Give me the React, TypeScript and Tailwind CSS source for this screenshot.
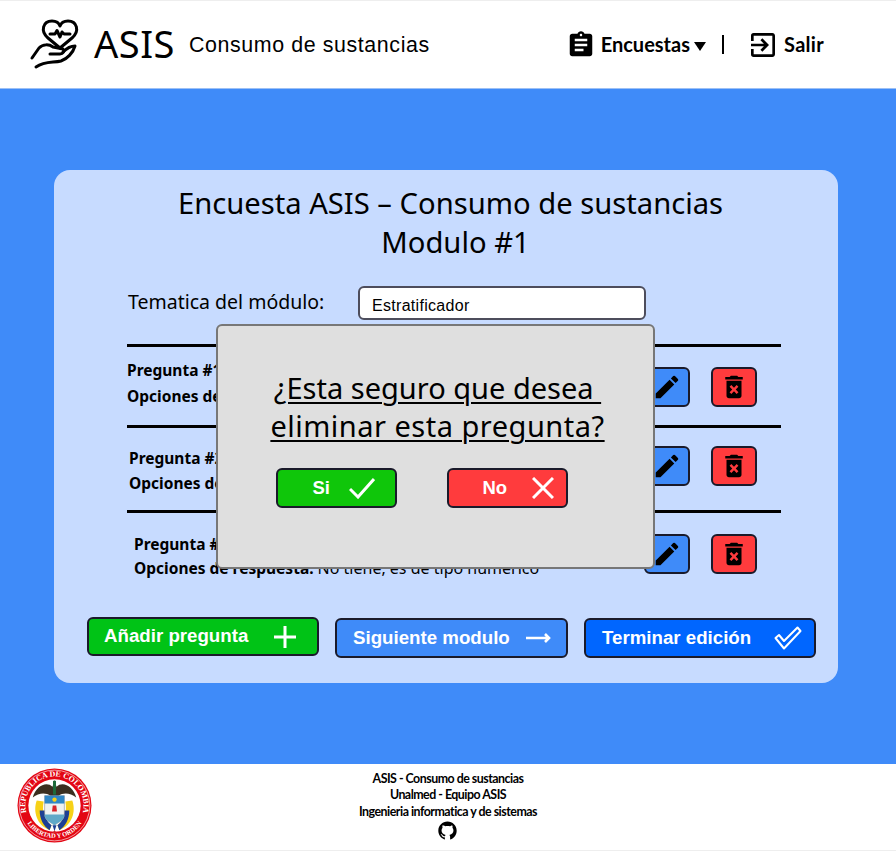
import { MdAssignment, MdDeleteForever, MdEdit, MdOutlineExitToApp } from "react-icons/md";
import { AiOutlineGithub } from "react-icons/ai";

function Logo() {
  return (
    <svg width="60" height="60" viewBox="0 0 60 60" fill="none" stroke="black" strokeWidth="3" strokeLinecap="round" strokeLinejoin="round">
      <path d="M35 33 L23 23 C15 16 18 6 27 6 C31 6 34 8 35 11 C36 8 39 6 43 6 C52 6 55 16 47 23 Z" />
      <path d="M25 19 H30 L32 15.5 L35 22 L37 17 L39 19 H45" />
      <path d="M7 43 L14 33 C18 29 24 29 28 32 L38 34 C40 36 38 39 35 39 L25 39" />
      <path d="M11 52 C20 46 28 48 36 46 C42 44 48 38 50 31 C46 31 41 34 38 37" />
    </svg>
  );
}

function Escudo() {
  return (
    <svg width="75" height="75" viewBox="0 0 76 76">
      <circle cx="38" cy="38" r="37.5" fill="#e30613" />
      <circle cx="38" cy="38" r="35.8" fill="none" stroke="white" strokeWidth="0.6" />
      <circle cx="38" cy="38" r="26.5" fill="white" />
      <defs>
        <path id="arcTop" d="M9.9 47 A29.5 29.5 0 1 1 66.1 47" />
        <path id="arcBottom" d="M7.3 50 A33 33 0 0 0 68.7 50" />
      </defs>
      <text fontSize="8" fontWeight="700" fill="white" fontFamily="'Liberation Serif', serif">
        <textPath href="#arcTop" startOffset="50%" textAnchor="middle">REPUBLICA DE COLOMBIA</textPath>
      </text>
      <text fontSize="6.6" fontWeight="700" fill="white" fontFamily="'Liberation Serif', serif">
        <textPath href="#arcBottom" startOffset="50%" textAnchor="middle">LIBERTAD Y ORDEN</textPath>
      </text>
      {/* condor */}
      <path d="M16 30 C19 18 30 13 36 19 L38 12 L40 19 C46 13 57 18 60 30 C54 25 47 25 42 28 L34 28 C29 25 22 25 16 30 Z" fill="#3b2f20" />
      <rect x="36.5" y="13" width="3" height="14" fill="#1e6b3a" />
      {/* banderas */}
      <path d="M20 33 C16 44 20 58 33 63 L35 58 C28 54 25 44 27 34 Z" fill="#f7d117" />
      <path d="M56 33 C60 44 56 58 43 63 L41 58 C48 54 51 44 49 34 Z" fill="#f7d117" />
      <path d="M23 43 C23 52 27 59 33 63 L35 58 C31 55 28 50 28 43 Z" fill="#1d3f94" />
      <path d="M53 43 C53 52 49 59 43 63 L41 58 C45 55 48 50 48 43 Z" fill="#1d3f94" />
      {/* escudo */}
      <path d="M28 28 H48 V48 C48 53 42 55 38 58 C34 55 28 53 28 48 Z" fill="#eef2f2" stroke="#555" strokeWidth="0.4" />
      <rect x="28" y="28" width="20" height="8" fill="#2f86c5" />
      <circle cx="38" cy="32" r="2.2" fill="#f7d117" />
      <path d="M36.2 38 H39.8 L40.5 44 H35.5 Z" fill="#d8232a" />
      <path d="M28 47 H48 V48 C48 53 42 55 38 58 C34 55 28 53 28 48 Z" fill="#5fa8c8" />
      <path d="M36 58 H40 L38 64 Z" fill="#1d3f94" />
      <path d="M38 63 L35.5 66 H40.5 Z" fill="#d8232a" />
    </svg>
  );
}

function BotonesFila(props: { mt: string }) {
  return (
    <div className={"flex items-center gap-[21px] pr-[24px] " + props.mt}>
      <button className="w-[46px] h-[40px] flex items-center justify-center bg-[#3f8bf9] border-2 border-[#1a1a2a] rounded-md text-black">
        <MdEdit size={30} />
      </button>
      <button className="w-[46px] h-[40px] flex items-center justify-center bg-[#ff3b3d] border-2 border-[#1a1a2a] rounded-md text-black">
        <MdDeleteForever size={30} />
      </button>
    </div>
  );
}

function Fila(props: { titulo: string; opciones: string; detalle?: string; texto: string; botones: string; alto: string }) {
  return (
    <div className={"flex items-start justify-between " + props.alto}>
      <div className={"font-['Noto_Sans',sans-serif] text-[15.5px] text-black font-bold " + props.texto}>
        <p>{props.titulo}</p>
        <p>
          {props.opciones} <span className="font-normal text-[16px]">{props.detalle}</span>
        </p>
      </div>
      <BotonesFila mt={props.botones} />
    </div>
  );
}

export default function App() {
  return (
    <div className="h-[851px] flex flex-col bg-white border-t border-b border-[#eeeeee] overflow-hidden">
      {/* HEADER */}
      <header className="h-[87px] shrink-0 flex items-center justify-between bg-white pl-[25px] pr-[72px]">
        <div className="flex items-center">
          <Logo />
          <span className="ml-[9px] mb-[2px] font-['Noto_Sans',sans-serif] text-[38px] text-black tracking-[0.5px]">ASIS</span>
          <span className="ml-[14px] mt-[2px] font-['Liberation_Sans',sans-serif] text-[21.4px] text-black tracking-[0.6px]">Consumo de sustancias</span>
        </div>
        <nav className="flex items-center text-black font-['Lato',sans-serif] font-bold text-[20px]">
          <MdAssignment size={30} className="mr-[5px]" />
          <span className="mb-[2px]">Encuestas</span>
          <span className="ml-[4px] mt-[3px] w-0 h-0 border-x-[6px] border-x-transparent border-t-[9px] border-t-black" />
          <span className="ml-[16px] w-[2px] h-[19px] bg-black" />
          <MdOutlineExitToApp size={32} className="ml-[23px]" />
          <span className="ml-[5px] mb-[2px] tracking-[0.3px]">Salir</span>
        </nav>
      </header>

      {/* MAIN */}
      <main className="flex-1 bg-[#3f8bf9] border-t border-[#9cc0f5] pt-[81px] pl-[54px] pr-[58px]">
        <section className="relative h-[513px] bg-[#c7dbff] rounded-2xl pt-[14px]">
          <h1 className="ml-[9px] text-center font-['Noto_Sans',sans-serif] text-[29.2px] leading-[39px] text-black">
            Encuesta ASIS – Consumo de sustancias
            <br />
            <span className="ml-[10px]">Modulo #1</span>
          </h1>

          <div className="mt-[24px] ml-[74px] flex items-center">
            <label className="w-[230px] -mt-[2px] font-['Noto_Sans',sans-serif] text-[19.5px] text-black">Tematica del módulo:</label>
            <input
              readOnly
              value="Estratificador"
              className="w-[288px] h-[34px] px-[12px] pt-[6px] bg-white border-2 border-[#4d4d5c] rounded-md font-['Liberation_Sans',sans-serif] text-[16px] tracking-[0.3px] text-black"
            />
          </div>

          <div className="mt-[24px] ml-[73px] w-[654px]">
            <hr className="border-0 h-[3px] bg-black" />
            <Fila alto="h-[78px]" texto="pt-[10px] leading-[26px]" botones="mt-[20px]" titulo="Pregunta #1" opciones="Opciones de respuesta:" />
            <hr className="border-0 h-[3px] bg-black" />
            <Fila alto="h-[82px]" texto="ml-[2px] pt-[18px] leading-[25px]" botones="mt-[18px]" titulo="Pregunta #2" opciones="Opciones de respuesta:" />
            <hr className="border-0 h-[3px] bg-black" />
            <Fila alto="h-[67px]" texto="ml-[7px] pt-[19px] leading-[24px]" botones="mt-[21px]" titulo="Pregunta #3" opciones="Opciones de respuesta:" detalle="No tiene, es de tipo numerico" />
          </div>

          <div className="mt-[37px] ml-[33px] flex items-start gap-[16px] font-['Liberation_Sans',sans-serif] font-bold text-[18.7px] text-white">
            <button className="w-[232px] h-[39px] flex items-center justify-between pl-[15px] pr-[20px] bg-[#00c316] border-2 border-[#1a1a2a] rounded-md">
              Añadir pregunta
              <svg width="24" height="24" viewBox="0 0 24 24" stroke="white" strokeWidth="3"><path d="M12 1V23M1 12H23" /></svg>
            </button>
            <button className="mt-[1px] w-[233px] h-[40px] flex items-center justify-between pl-[16px] pr-[15px] bg-[#3f8bf9] border-2 border-[#1a1a2a] rounded-md">
              Siguiente modulo
              <svg width="26" height="12" viewBox="0 0 26 12" fill="none" stroke="white" strokeWidth="2.6"><path d="M1 6H24M20 2L24 6L20 10" /></svg>
            </button>
            <button className="mt-[1px] w-[232px] h-[40px] flex items-center justify-between pl-[16px] pr-[12px] bg-[#0066ff] border-2 border-[#1a1a2a] rounded-md">
              Terminar edición
              <svg width="28" height="24" viewBox="0 0 28 24" fill="none" stroke="white" strokeWidth="2" strokeLinejoin="round"><path d="M1.5 12L5 9L10 15L23.5 1.5L26.5 5L10 22.5Z" /></svg>
            </button>
          </div>

          {/* MODAL */}
          <div className="absolute left-[162px] top-[154px] w-[439px] h-[245px] flex flex-col items-center bg-[#dfdfdf] border-2 border-[#777] rounded-md pt-[43px]">
            <p className="pl-[4px] text-center font-['Noto_Sans',sans-serif] text-[29px] leading-[38px] text-black underline underline-offset-[3px] decoration-2">
              ¿Esta seguro que desea&nbsp;
              <br />
              <span className="tracking-[0.5px]">eliminar esta pregunta?</span>
            </p>
            <div className="mt-[23px] -ml-[28px] flex gap-[50px] font-['Liberation_Sans',sans-serif] font-bold text-[18.5px] text-white">
              <button className="w-[121px] h-[40px] flex items-center gap-[19px] pl-[35px] bg-[#0fc60a] border-2 border-[#1a1a2a] rounded-md">
                Si
                <svg width="26" height="22" viewBox="0 0 26 22" fill="none" stroke="white" strokeWidth="3"><path d="M1 12L9 20L25 2" /></svg>
              </button>
              <button className="w-[121px] h-[40px] flex items-center gap-[25px] pl-[34px] bg-[#ff3b3d] border-2 border-[#1a1a2a] rounded-md">
                No
                <svg width="22" height="22" viewBox="0 0 22 22" fill="none" stroke="white" strokeWidth="3"><path d="M1 1L21 21M21 1L1 21" /></svg>
              </button>
            </div>
          </div>
        </section>
      </main>

      {/* FOOTER */}
      <footer className="relative h-[86px] shrink-0 bg-white flex justify-center pt-[7px]">
        <div className="absolute left-[17px] top-[4px]">
          <Escudo />
        </div>
        <div className="flex flex-col items-center font-['Lato',sans-serif] font-bold text-[12.4px] leading-[16.3px] tracking-[-0.5px] text-black">
          <p>ASIS - Consumo de sustancias</p>
          <p>Unalmed - Equipo ASIS</p>
          <p>Ingenieria informatica y de sistemas</p>
          <AiOutlineGithub size={21} className="mt-[0.5px] -ml-[2px]" />
        </div>
      </footer>
    </div>
  );
}
